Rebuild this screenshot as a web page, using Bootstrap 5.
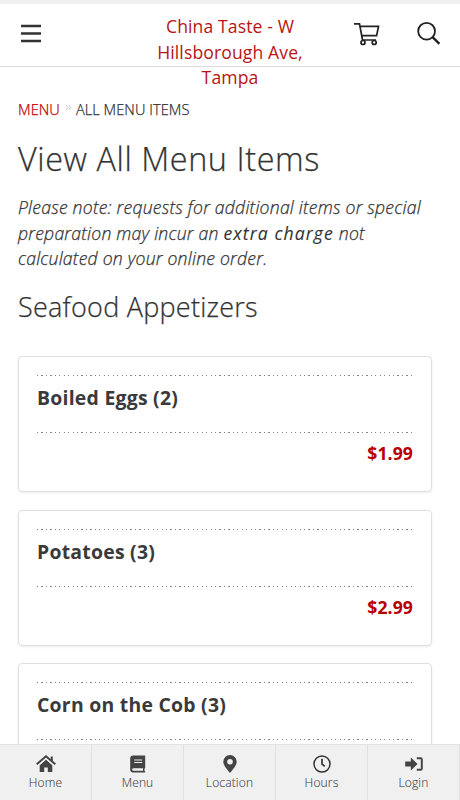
<!DOCTYPE html>
<html lang="en">
<head>
<meta charset="utf-8">
<meta name="viewport" content="width=device-width, initial-scale=1">
<title>China Taste - All Menu Items</title>
<link rel="stylesheet" href="https://cdn.jsdelivr.net/npm/bootstrap@5.3.0/dist/css/bootstrap.min.css">
<style>
html, body { height: 100%; }
body { font-family: "Open Sans", sans-serif; font-weight: 300; color: #333; background: #fff; letter-spacing: .2px; }
.app { height: 100vh; }
.topbar { height: 67px; border-top: 4px solid #f0f0f0; border-bottom: 1px solid #dcdcdc; padding: 10px 18px 0; }
.side { width: 90px; padding-top: 6px; }
.side svg { display: block; }
.brand { width: 170px; font-size: 17.6px; line-height: 25.6px; color: #b81414; font-weight: 400; letter-spacing: .1px; }
.content { padding: 0 28px 0 18px; }
.crumbs { padding-top: 31px; font-size: 14.6px; line-height: 22px; letter-spacing: .05px; }
.crumbs, .page-title, .note, .section-title { -webkit-text-stroke: .25px currentColor; }
.crumbs a { color: #c00000; }
.crumbs svg { margin: -4px 4px 0 5px; }
.page-title { font-size: 32.4px; line-height: 40px; font-weight: 300; margin: 18px 0 0; letter-spacing: .57px; }
.note { font-size: 17.6px; line-height: 25.6px; margin: 17px 0 0; white-space: nowrap; letter-spacing: .22px; }
.note strong { font-weight: 400; letter-spacing: 1.1px; -webkit-text-stroke: .1px currentColor; }
.section-title { font-size: 27px; line-height: 34px; font-weight: 300; margin: 18px 0 0; letter-spacing: .25px; }
.items { padding-top: 32.4px; gap: 17.5px; }
.dish { height: 136px; flex: none; border: 1px solid #dfdfdf; border-radius: 4px; padding: 18px; box-shadow: 0 1px 3px rgba(0,0,0,.07); }
.dots { height: 1px; background: repeating-linear-gradient(90deg, #858585 0 1.2px, transparent 1.2px 4.45px); }
.dish h3 { font-size: 19.4px; font-weight: 700; line-height: 26px; margin: 9px 0 21px; letter-spacing: .25px; color: #3a3a3a; }
.price { font-size: 17.6px; font-weight: 700; line-height: 24px; color: #b80000; margin-top: 8px; letter-spacing: .1px; }
.tabs { height: 56px; background: #f0f0f0; border-top: 1px solid #e2e2e2; }
.tabs a { color: #444; font-size: 12px; line-height: 16px; padding-top: 10px; border-right: 1px solid #e0e0e0; letter-spacing: .15px; -webkit-text-stroke: .1px currentColor; }
.tabs svg { display: block; margin-bottom: 2px; fill: #444; }
</style>
</head>
<body>
<div class="app d-flex flex-column overflow-hidden">
  <header class="topbar d-flex justify-content-between align-items-start flex-shrink-0">
    <div class="side">
      <svg width="26" height="26" viewBox="0 0 26 26" aria-label="Menu"><path d="M3 6h20M3 13.5h20M3 21h20" stroke="#333" stroke-width="2.3" fill="none"/></svg>
    </div>
    <div class="brand text-center">China Taste - W Hillsborough Ave, Tampa</div>
    <div class="side d-flex justify-content-between">
      <svg width="28" height="28" viewBox="-2 0 28 28" fill="none" stroke="#222" stroke-width="1.7" aria-label="Cart"><path d="M0 3.8h5.5l3 16.2H22M6.2 6.3H24.5L22.6 15.7H8"/><circle cx="9" cy="22.5" r="2"/><circle cx="20.2" cy="22.5" r="2"/></svg>
      <svg width="26" height="26" viewBox="0 0 26 26" fill="none" stroke="#222" aria-label="Search"><circle cx="10.6" cy="11.2" r="8.4" stroke-width="1.8"/><path d="M16.6 17.2l6.8 6.6" stroke-width="2.4"/></svg>
    </div>
  </header>
  <main class="content flex-grow-1 overflow-hidden">
    <nav class="crumbs d-flex align-items-center"><a href="#" class="text-decoration-none">MENU</a><svg width="7" height="7" viewBox="0 0 7 7" fill="none" stroke="#bbb" stroke-width=".9"><path d="M.7 1l2.5 2.5L.7 6M3.5 1L6 3.5 3.5 6"/></svg><span>ALL MENU ITEMS</span></nav>
    <h1 class="page-title">View All Menu Items</h1>
    <p class="note fst-italic">Please note: requests for additional items or special<br>preparation may incur an <strong>extra charge</strong> not<br>calculated on your online order.</p>
    <h2 class="section-title">Seafood Appetizers</h2>
    <div class="items d-flex flex-column">
      <article class="dish"><div class="dots"></div><h3>Boiled Eggs (2)</h3><div class="dots"></div><div class="price text-end">$1.99</div></article>
      <article class="dish"><div class="dots"></div><h3>Potatoes (3)</h3><div class="dots"></div><div class="price text-end">$2.99</div></article>
      <article class="dish"><div class="dots"></div><h3>Corn on the Cob (3)</h3><div class="dots"></div></article>
    </div>
  </main>
  <nav class="tabs d-flex flex-shrink-0">
    <a href="#" class="flex-fill w-100 d-flex flex-column align-items-center text-decoration-none"><svg width="20" height="18" viewBox="0 0 20 18"><path d="M10 4.5l6.3 5.7V17H11.8v-4.5H8.2V17H3.7v-6.8z"/><path d="M.7 9.2L10 1.3l9.3 7.9M15.8 1.5v4.4" fill="none" stroke="#444" stroke-width="2"/><path d="M2.8 10.3L10 4.2l7.2 6.1" fill="none" stroke="#f0f0f0" stroke-width=".8"/></svg>Home</a>
    <a href="#" class="flex-fill w-100 d-flex flex-column align-items-center text-decoration-none"><svg width="16" height="18" viewBox="0 0 16 18"><path fill-rule="evenodd" d="M3.2.5H15.2V13l-.7.8v2.2l.7.4v1.1H3.2A3 3 0 0 1 .2 14.5v-11A3 3 0 0 1 3.2.5zM4.2 4.5v1h8v-1zm0 2.6v1h8v-1zM3.5 13.2a1.3 1.3 0 0 0 0 2.6H13v-2.6z"/></svg>Menu</a>
    <a href="#" class="flex-fill w-100 d-flex flex-column align-items-center text-decoration-none"><svg width="14" height="18" viewBox="0 0 14 18"><path fill-rule="evenodd" d="M7 0a6.7 6.7 0 0 1 6.7 6.7C13.7 10 10.5 13.8 7 18 3.5 13.8.3 10 .3 6.7A6.7 6.7 0 0 1 7 0zm0 3.9a2.8 2.8 0 1 0 0 5.6 2.8 2.8 0 0 0 0-5.6z"/></svg>Location</a>
    <a href="#" class="flex-fill w-100 d-flex flex-column align-items-center text-decoration-none"><svg width="18" height="18" viewBox="0 0 18 18"><circle cx="9" cy="9" r="8" fill="none" stroke="#333" stroke-width="1.5"/><path d="M9 3.8V9.2l2.8 2.2" fill="none" stroke="#333" stroke-width="1.7"/></svg>Hours</a>
    <a href="#" class="flex-fill w-100 d-flex flex-column align-items-center text-decoration-none"><svg width="18" height="18" viewBox="0 0 18 18"><path d="M.2 6.4h5.6V2.6L12.6 9l-6.8 6.4v-3.8H.2z"/><path d="M11.8 3.2h3.7a1.3 1.3 0 0 1 1.3 1.3v9a1.3 1.3 0 0 1-1.3 1.3h-3.7" fill="none" stroke="#444" stroke-width="2"/></svg>Login</a>
  </nav>
</div>
<script src="https://cdn.jsdelivr.net/npm/bootstrap@5.3.0/dist/js/bootstrap.bundle.min.js"></script>
</body>
</html>
